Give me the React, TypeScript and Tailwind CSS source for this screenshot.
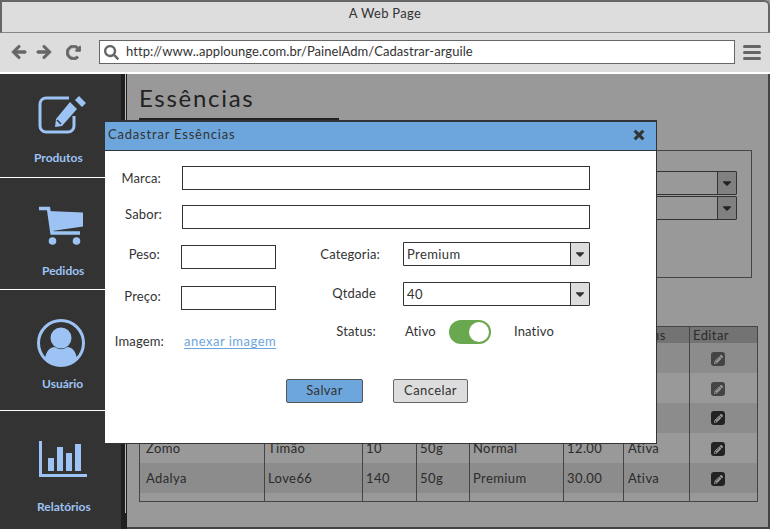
import React from 'react';
import { FaArrowLeft, FaArrowRight, FaRedoAlt, FaSearch, FaTimes, FaCaretDown, FaPencilAlt } from 'react-icons/fa';

function EditIcon() {
    return (
        <svg width="50" height="40" viewBox="0 0 50 40" fill="none">
            <path d="M31 3H8a6 6 0 0 0-6 6v22a6 6 0 0 0 6 6h22a6 6 0 0 0 6-6V21" stroke="#9dc3f5" strokeWidth="3" />
            <path d="M41 1l7 7-4 4-7-7zM32 7l7 7-15 17-7 1 1-8z" fill="#9dc3f5" />
            <path d="M19 25l4 4" stroke="#333" strokeWidth="1.5" />
        </svg>
    );
}

function CartIcon() {
    return (
        <svg width="46" height="40" viewBox="0 0 46 40" fill="none">
            <path d="M0 2.5h9.5l3.5 24.5h28" stroke="#9dc3f5" strokeWidth="3.5" />
            <path d="M9 5l35 1.500v14l-31 4.500z" fill="#9dc3f5" />
            <circle cx="13.500" cy="35" r="3.800" fill="#9dc3f5" />
            <circle cx="37.500" cy="35" r="3.800" fill="#9dc3f5" />
        </svg>
    );
}

function UserIcon() {
    return (
        <svg width="48" height="48" viewBox="0 0 48 48" fill="none">
            <circle cx="24" cy="24" r="22.5" stroke="#9dc3f5" strokeWidth="3" />
            <circle cx="24" cy="19" r="10.5" fill="#9dc3f5" />
            <path d="M8 40c1-8 5-12 10-12 4 3 8 3 12 0 5 0 9 4 10 12-9 7-23 7-32 0z" fill="#9dc3f5" />
        </svg>
    );
}

function ChartIcon() {
    return (
        <svg width="48" height="37" viewBox="0 0 48 37" fill="none">
            <path d="M1.500 0v34.500h46.500" stroke="#9dc3f5" strokeWidth="3" />
            <path d="M9 17h6v13H9zM18 6h6v24h-6zM27 12h6v18h-6zM36 3h6v27h-6z" fill="#9dc3f5" />
        </svg>
    );
}

function Select({ value }: { value: string }) {
    return (
        <div className="flex h-6 w-[187px] rounded-r-[1px] border border-[#333] bg-white">
            <span className="flex-1 pl-[3px] text-[13px] leading-[22px] tracking-[0.4px] text-[#333]">{value}</span>
            <span className="flex w-[19px] items-center justify-center border-l border-[#333] bg-[#ddd] text-[#333]">
                <FaCaretDown size={14} />
            </span>
        </div>
    );
}

function DimSelect() {
    return (
        <div className="flex h-6 w-[300px] justify-end rounded-r-[1px] border border-[#333]">
            <span className="flex w-[19px] items-center justify-center border-l border-[#333] bg-[#808080] text-[#222]">
                <FaCaretDown size={14} />
            </span>
        </div>
    );
}

function RowEdit({ tone }: { tone: string }) {
    return (
        <div className={`flex h-[14px] w-[14px] items-center justify-center rounded-[3px] text-[#999] ${tone}`}>
            <FaPencilAlt size={9} />
        </div>
    );
}

function FieldLabel({ text, className }: { text: string; className: string }) {
    return <span className={`text-[13px] tracking-[0.15px] text-[#333] ${className}`}>{text}</span>;
}

const td = 'border-x border-[#444] text-[13px] tracking-[0.4px] text-[#2b2b2b]';
const editTd = 'border-x border-[#444] pl-[21px] pt-[2px]';

export default function App() {
    return (
        <div className="relative flex h-[529px] w-[770px] flex-col overflow-hidden bg-[#999] font-['Lato',sans-serif]">
            <div className="flex h-[33px] shrink-0 items-start justify-center rounded-tr-md border-x-2 border-t-2 border-b border-[#666] border-b-[#888] bg-[#ddd] pt-[2px] text-[13px] tracking-[0.3px] text-[#333]">
                A Web Page
            </div>
            <div className="flex h-[41px] shrink-0 items-center border-b-2 border-b-white bg-[#ddd] pb-[1px] pl-[11px] text-[#666]">
                <FaArrowLeft size={16} stroke="currentColor" strokeWidth={30} />
                <FaArrowRight size={16} className="ml-[9px]" stroke="currentColor" strokeWidth={30} />
                <FaRedoAlt size={15} className="ml-[14px]" stroke="currentColor" strokeWidth={30} />
                <div className="ml-[18px] flex h-6 w-[636px] items-center border border-[#666] bg-white pl-[4px]">
                    <FaSearch size={15} />
                    <span className="ml-[7px] text-[13px] tracking-[0.05px] text-[#333]">http://www..applounge.com.br/PainelAdm/Cadastrar-arguile</span>
                </div>
                <div className="ml-[8px] flex w-[18px] flex-col gap-[3px]">
                    <span className="h-[3px] rounded bg-[#666]" />
                    <span className="h-[3px] rounded bg-[#666]" />
                    <span className="h-[3px] rounded bg-[#666]" />
                </div>
            </div>

            <div className="flex min-h-0 flex-1">
                <aside className="flex w-[121px] shrink-0 flex-col bg-[#333] text-[12px] font-bold text-[#9dc3f5]">
                    <div className="flex h-[104px] flex-col items-start gap-[14px] border-b border-white pl-[38px] pt-[21px]">
                        <EditIcon />
                        <span className="ml-[-4px]">Produtos</span>
                    </div>
                    <div className="flex h-[112px] flex-col items-start gap-4 border-b border-white pl-[39px] pt-[28px]">
                        <CartIcon />
                        <span className="ml-[3px]">Pedidos</span>
                    </div>
                    <div className="flex h-[121px] flex-col items-start gap-2 border-b border-white pl-[37px] pt-[29px]">
                        <UserIcon />
                        <span className="ml-[5px]">Usuário</span>
                    </div>
                    <div className="flex flex-col items-start gap-5 pl-[39px] pt-[30px]">
                        <ChartIcon />
                        <span className="ml-[-2px]">Relatórios</span>
                    </div>
                </aside>
                <div className="h-full w-[6px] shrink-0 bg-[#1f1f1f]">
                    <div className="ml-[4px] h-[439px] w-px bg-[#bbb]" />
                </div>

                <main className="min-w-0 flex-1 border-b-2 border-r-2 border-[#444] pl-[12px]">
                    <div className="h-[46px] w-[200px] border-b-2 border-[#222] pt-[10px] text-[24px] leading-7 tracking-[1.7px] text-[#222]">Essências</div>
                    <div className="mt-[30px] flex h-[128px] w-[613px] flex-col items-end gap-px border border-[#444] pr-[14px] pt-[20px]">
                        <DimSelect />
                        <DimSelect />
                    </div>
                    <table className="mt-[48px] h-[175px] w-[618px] table-fixed border-collapse border border-[#444]">
                        <colgroup>
                            <col className="w-[125px]" />
                            <col className="w-[98px]" />
                            <col className="w-[54px]" />
                            <col className="w-[53px]" />
                            <col className="w-[94px]" />
                            <col className="w-[60px]" />
                            <col className="w-[66px]" />
                            <col className="w-[68px]" />
                        </colgroup>
                        <tbody>
                            <tr className="h-[16px] bg-[#737373] leading-4">
                                <td className={td} />
                                <td className={td} />
                                <td className={td} />
                                <td className={td} />
                                <td className={td} />
                                <td className={td} />
                                <td className={`${td} pl-[4px]`}>Status</td>
                                <td className={`${td} pl-[3px]`}>Editar</td>
                            </tr>
                            <tr className="h-[30px] bg-[#8c8c8c]">
                                <td className={td} />
                                <td className={td} />
                                <td className={td} />
                                <td className={td} />
                                <td className={td} />
                                <td className={td} />
                                <td className={td} />
                                <td className={editTd}><RowEdit tone="bg-[#444]" /></td>
                            </tr>
                            <tr className="h-[30px]">
                                <td className={td} />
                                <td className={td} />
                                <td className={td} />
                                <td className={td} />
                                <td className={td} />
                                <td className={td} />
                                <td className={td} />
                                <td className={editTd}><RowEdit tone="bg-[#444]" /></td>
                            </tr>
                            <tr className="h-[30px] bg-[#8c8c8c]">
                                <td className={td} />
                                <td className={td} />
                                <td className={td} />
                                <td className={td} />
                                <td className={td} />
                                <td className={td} />
                                <td className={td} />
                                <td className="border-x border-[#444] pl-[21px]"><RowEdit tone="bg-[#222]" /></td>
                            </tr>
                            <tr className="h-[30px]">
                                <td className={`${td} pl-[6px] pt-[2px]`}>Zomo</td>
                                <td className={`${td} pl-[3px] pt-[2px]`}>Timão</td>
                                <td className={`${td} pl-[3px] pt-[2px]`}>10</td>
                                <td className={`${td} pl-[3px] pt-[2px]`}>50g</td>
                                <td className={`${td} pl-[3px] pt-[2px]`}>Normal</td>
                                <td className={`${td} pl-[3px] pt-[2px]`}>12.00</td>
                                <td className={`${td} pl-[4px] pt-[2px]`}>Ativa</td>
                                <td className={editTd}><RowEdit tone="bg-[#222]" /></td>
                            </tr>
                            <tr className="h-[30px] bg-[#8c8c8c]">
                                <td className={`${td} pl-[6px] pt-[2px]`}>Adalya</td>
                                <td className={`${td} pl-[3px] pt-[2px]`}>Love66</td>
                                <td className={`${td} pl-[3px] pt-[2px]`}>140</td>
                                <td className={`${td} pl-[3px] pt-[2px]`}>50g</td>
                                <td className={`${td} pl-[3px] pt-[2px]`}>Premium</td>
                                <td className={`${td} pl-[3px] pt-[2px]`}>30.00</td>
                                <td className={`${td} pl-[4px] pt-[2px]`}>Ativa</td>
                                <td className={editTd}><RowEdit tone="bg-[#222]" /></td>
                            </tr>
                            <tr className="h-[8px]">
                                <td className={td} />
                                <td className={td} />
                                <td className={td} />
                                <td className={td} />
                                <td className={td} />
                                <td className={td} />
                                <td className={td} />
                                <td className={td} />
                            </tr>
                        </tbody>
                    </table>
                </main>
            </div>

            {/* modal */}
            <div className="absolute left-[105px] top-[120px] flex h-[324px] w-[552px] flex-col border-r border-b border-t-2 border-[#333] bg-white">
                <div className="flex h-[29px] shrink-0 items-center justify-between border-b border-[#333] bg-[#6ca6dc] pb-[2px] pl-[3px] pr-[10px] text-[13px] tracking-[0.8px] text-[#333]">
                    <span>Cadastrar Essências</span>
                    <FaTimes size={14} stroke="currentColor" strokeWidth={25} />
                </div>

                <div className="flex items-center pt-[15px]">
                    <FieldLabel text="Marca:" className="w-[56px] text-right leading-5" />
                    <div className="ml-[21px] h-6 w-[408px] border border-[#333]" />
                </div>
                <div className="flex items-center pt-[15px]">
                    <FieldLabel text="Sabor:" className="mb-[6px] w-[57px] text-right leading-[14px]" />
                    <div className="ml-5 h-6 w-[408px] border border-[#333]" />
                </div>

                <div className="flex">
                    <div className="flex w-[214px] shrink-0 flex-col">
                        <div className="mt-4 flex items-center">
                            <FieldLabel text="Peso:" className="mb-[6px] w-[55px] text-right leading-[14px]" />
                            <div className="ml-[21px] h-6 w-[95px] border border-[#333]" />
                        </div>
                        <div className="mt-[17px] flex items-center">
                            <FieldLabel text="Preço:" className="mb-[4px] w-[56px] text-right leading-4" />
                            <div className="ml-5 h-6 w-[95px] border border-[#333]" />
                        </div>
                        <div className="mt-[21px] flex items-center">
                            <FieldLabel text="Imagem:" className="w-[59px] text-right leading-5" />
                            <a href="#" className="ml-5 text-[13px] leading-5 tracking-[0.5px] text-[#6ca6dc] underline underline-offset-2">anexar imagem</a>
                        </div>
                    </div>
                    <div className="flex flex-col">
                        <div className="mt-[13px] flex items-center">
                            <FieldLabel text="Categoria:" className="w-[61px] text-right leading-5" />
                            <div className="ml-[23px]"><Select value="Premium" /></div>
                        </div>
                        <div className="mt-4 flex items-center">
                            <FieldLabel text="Qtdade" className="mb-[2px] w-[57px] text-right leading-5" />
                            <div className="ml-[27px]"><Select value="40" /></div>
                        </div>
                        <div className="mt-[14px] flex items-center">
                            <FieldLabel text="Status:" className="mb-[2px] w-[57px] text-right leading-5" />
                            <FieldLabel text="Ativo" className="mb-[2px] ml-[29px] w-[44px] leading-5" />
                            <div className="flex h-6 w-[42px] items-center justify-end rounded-full bg-[#6aa84f] pr-[2px]">
                                <span className="h-5 w-5 rounded-full bg-white" />
                            </div>
                            <FieldLabel text="Inativo" className="mb-[2px] ml-[23px] leading-5" />
                        </div>
                    </div>
                </div>

                <div className="ml-[181px] mt-[28px] flex gap-[30px] text-[13px] tracking-[0.4px] text-[#333]">
                    <button className="h-6 w-[77px] rounded-[2px] border border-[#555] bg-[#6ca6dc]">Salvar</button>
                    <button className="h-6 w-[75px] rounded-[2px] border border-[#666] bg-[#ddd]">Cancelar</button>
                </div>
            </div>
        </div>
    );
}
